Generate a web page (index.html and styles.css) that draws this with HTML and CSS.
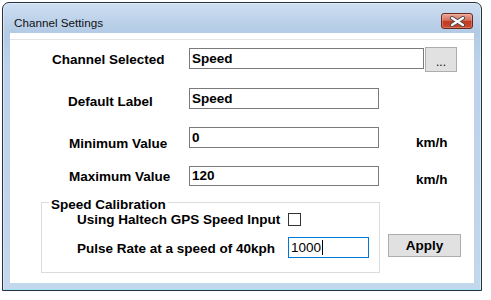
FILE: index.html
```html
<!DOCTYPE html>
<html lang="en">

<head>
    <meta charset="UTF-8">
    <title>Channel Settings</title>
    <link rel="stylesheet" href="styles.css">
</head>

<body>
    <div class="window">
        <div class="titlebar">
            <span class="title">Channel Settings</span>
            <span class="close">
                <svg width="17" height="11" viewBox="0 0 17 11">
                    <path d="M3 2 L14 9 M14 2 L3 9" stroke="#4a4a4a" stroke-width="4" stroke-linecap="round" fill="none"/>
                    <path d="M3 2 L14 9 M14 2 L3 9" stroke="#fff" stroke-width="2.2" stroke-linecap="round" fill="none"/>
                </svg>
            </span>
        </div>

        <div class="client">
            <div class="panel">
                <div class="row row-channel">
                    <span class="label label-channel">Channel Selected</span>
                    <div class="textbox textbox-wide">Speed</div>
                    <div class="btn btn-browse">...</div>
                </div>

                <div class="row row-default">
                    <span class="label label-default">Default Label</span>
                    <div class="textbox">Speed</div>
                </div>

                <div class="row row-min">
                    <span class="label label-min">Minimum Value</span>
                    <div class="textbox">0</div>
                    <span class="unit unit-min">km/h</span>
                </div>

                <div class="row row-max">
                    <span class="label label-max">Maximum Value</span>
                    <div class="textbox textbox-short">120</div>
                    <span class="unit unit-max">km/h</span>
                </div>

                <div class="calibration">
                    <fieldset class="group">
                        <legend>Speed Calibration</legend>
                        <div class="group-grid">
                            <span class="group-label">Using Haltech GPS Speed Input</span>
                            <span class="checkbox"></span>
                            <span class="group-label group-label-pulse">Pulse Rate at a speed of 40kph</span>
                            <div class="textbox textbox-focus">1000<span class="caret"></span></div>
                        </div>
                    </fieldset>
                    <div class="btn btn-apply">Apply</div>
                </div>
            </div>
        </div>
    </div>
</body>

</html>
```

FILE: styles.css
```css
* {
    box-sizing: border-box;
}
body {
    margin: 0;
    background: #fff;
    font-family: "Liberation Sans", Arial, sans-serif;
    color: #000;
}
.window {
    display: flex;
    flex-direction: column;
    width: 480px;
    height: 289px;
    margin: 2px 0 0 2px;
    border: 1px solid #27313c;
    border-radius: 7px 7px 0 0;
    background: linear-gradient(#cddef1, #b2cae5 30px, #bcd2ea 60px, #c3d7ed);
    box-shadow: inset 0 0 0 1px rgba(255, 255, 255, .45), inset 0 -1px 0 #4fcbe9;
}
.titlebar {
    display: flex;
    align-items: flex-start;
    height: 30px;
    padding: 10px 8px 0 11px;
}
.title {
    margin-top: 2px;
    font-size: 11.7px;
    line-height: 15px;
    color: #111;
}
.close {
    display: flex;
    align-items: center;
    justify-content: center;
    width: 32px;
    height: 16px;
    margin-left: auto;
    border: 1px solid #6b2a20;
    border-radius: 3px;
    background: linear-gradient(#eaa797, #d5705e 45%, #c13b20 52%, #c9492f);
    box-shadow: inset 0 0 0 1px rgba(255, 200, 180, .35);
}
.client {
    flex: 1;
    margin: 0 7px 7px;
    padding-top: 6px;
    background: #fff;
}
.panel {
    border-top: 1px solid #e4e4e4;
}
.row {
    display: flex;
    align-items: flex-start;
    height: 21px;
}
.label {
    width: 179px;
    font-size: 13.5px;
    font-weight: bold;
    line-height: 16px;
}
.row-channel {
    height: 25px;
    margin-top: 7px;
}
.row-default {
    margin-top: 16px;
}
.row-min {
    margin-top: 18px;
}
.row-max {
    height: 20px;
    margin-top: 18px;
}
.label-channel {
    margin-top: 5px;
    padding-left: 42px;
}
.label-default {
    margin-top: 6px;
    padding-left: 58px;
}
.label-min {
    margin-top: 9px;
    padding-left: 59px;
}
.label-max {
    margin-top: 3px;
    padding-left: 59px;
}
.textbox {
    width: 190px;
    height: 21px;
    padding: 0 2px;
    border: 1px solid #7a7a7a;
    background: #fff;
    font-size: 13.5px;
    font-weight: bold;
    line-height: 19px;
    white-space: nowrap;
}
.textbox-wide {
    width: 235px;
    margin-top: 1px;
}
.textbox-short {
    height: 20px;
    line-height: 18px;
}
.textbox-focus {
    width: 81px;
    border-color: #0078d7;
    font-weight: normal;
}
.caret {
    display: inline-block;
    width: 1px;
    height: 15px;
    margin-left: 1px;
    vertical-align: -3px;
    background: #000;
}
.unit {
    margin-left: 37px;
    font-size: 13.5px;
    font-weight: bold;
    line-height: 16px;
}
.unit-min {
    margin-top: 8px;
}
.unit-max {
    margin-top: 6px;
}
.btn {
    display: flex;
    align-items: center;
    justify-content: center;
    border: 1px solid #adadad;
    background: #e1e1e1;
}
.btn-browse {
    width: 32px;
    height: 25px;
    margin-left: 1px;
    padding-top: 5px;
    font-size: 12px;
}
.calibration {
    display: flex;
    align-items: flex-start;
    margin-top: 6px;
    padding-left: 31px;
}
.group {
    width: 339px;
    min-width: 0;
    margin: 0;
    padding: 0 0 14px 35px;
    border: 1px solid #dcdcdc;
}
.group legend {
    margin-left: -28px;
    padding: 6px 2px 0;
    font-size: 13.5px;
    font-weight: bold;
    line-height: 14px;
}
.group-grid {
    display: grid;
    grid-template-columns: 211px auto;
    grid-template-rows: 16px 21px;
    row-gap: 9px;
    align-items: start;
}
.group-label {
    font-size: 13.5px;
    font-weight: bold;
    line-height: 16px;
    white-space: nowrap;
}
.group-label-pulse {
    margin-top: 4px;
}
.checkbox {
    width: 13px;
    height: 13px;
    margin-top: 1px;
    border: 1px solid #333;
    background: #fff;
}
.btn-apply {
    width: 73px;
    height: 23px;
    margin: 42px 0 0 8px;
    font-size: 13.5px;
    font-weight: bold;
}
```
